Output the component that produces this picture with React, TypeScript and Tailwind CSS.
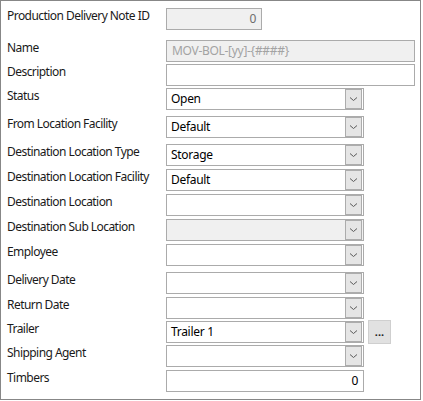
import { ReactNode } from "react";

type Row = {
  label: string;
  mt: string;
  kind: "text" | "select";
  width?: string;
  value?: string;
  disabled?: boolean;
  align?: "right";
  extra?: boolean;
};

const rows: Row[] = [
  { label: "Production Delivery Note ID", mt: "mt-[7px]", kind: "text", width: "w-[96px]", value: "0", disabled: true, align: "right" },
  { label: "Name", mt: "mt-[10px]", kind: "text", width: "w-[249px]", value: "MOV-BOL-[yy]-{####}", disabled: true },
  { label: "Description", mt: "mt-[2px]", kind: "text", width: "w-[249px]" },
  { label: "Status", mt: "mt-[2px]", kind: "select", value: "Open" },
  { label: "From Location Facility", mt: "mt-[6px]", kind: "select", value: "Default" },
  { label: "Destination Location Type", mt: "mt-[6px]", kind: "select", value: "Storage" },
  { label: "Destination Location Facility", mt: "mt-[3px]", kind: "select", value: "Default" },
  { label: "Destination Location", mt: "mt-[3px]", kind: "select" },
  { label: "Destination Sub Location", mt: "mt-[3px]", kind: "select", disabled: true },
  { label: "Employee", mt: "mt-[3px]", kind: "select" },
  { label: "Delivery Date", mt: "mt-[6px]", kind: "select" },
  { label: "Return Date", mt: "mt-[3px]", kind: "select" },
  { label: "Trailer", mt: "mt-[2px]", kind: "select", value: "Trailer 1", extra: true },
  { label: "Shipping Agent", mt: "mt-[2px]", kind: "select" },
  { label: "Timbers", mt: "mt-[3px]", kind: "text", width: "w-[198px]", value: "0", align: "right" },
];

const Chevron = () => (
  <svg width="9" height="6" viewBox="0 0 9 6" className="block">
    <path d="M1 1.5 L4.5 4.5 L8 1.5" fill="none" stroke="#5a5a5a" strokeWidth="1" />
  </svg>
);

const Field = ({ row }: { row: Row }): ReactNode => {
  if (row.kind === "text") {
    return (
      <div
        className={`${row.width} h-[22px] border border-[#ababab] flex items-center tracking-[-0.3px] ${row.disabled ? "bg-[#f0f0f0]" : "bg-white"} ${row.align === "right" ? "justify-end pr-[5px]" : "pl-[5px]"}`}
      >
        <span className={row.disabled ? (row.align === "right" ? "text-[#6d6d6d]" : "text-[#a3a3a3]") : "text-black"}>{row.value}</span>
      </div>
    );
  }
  return (
    <div className={`w-[198px] h-[22px] border border-[#ababab] flex items-stretch ${row.disabled ? "bg-[#f0f0f0]" : "bg-white"}`}>
      <div className="flex-1 flex items-center pl-[4px] text-black tracking-[-0.3px]">{row.value}</div>
      <div className="w-[17px] mr-[1px] border border-[#acacac] bg-[#e5e5e5] flex items-center justify-center">
        <Chevron />
      </div>
    </div>
  );
};

export default function App() {
  return (
    <div className="w-[421px] h-[400px] border border-[#878787] bg-white text-[12px] leading-[14px] text-[#1a1a1a]" style={{ fontFamily: '"Noto Sans", "Open Sans", sans-serif' }}>
      {rows.map((row) => (
        <div key={row.label} className={`flex items-start ${row.mt}`}>
          <div className="w-[165px] pl-[6px] pt-[1px] whitespace-nowrap tracking-[-0.55px]">{row.label}</div>
          <div className="flex items-center">
            <Field row={row} />
            {row.extra && (
              <div className="ml-[4px] -my-[1px] w-[23px] h-[24px] border border-[#cfcfcf] bg-[#e1e1e1] flex items-end justify-center pb-[6px] text-[11px] leading-[10px] font-bold text-[#222]">
                ...
              </div>
            )}
          </div>
        </div>
      ))}
    </div>
  );
}
